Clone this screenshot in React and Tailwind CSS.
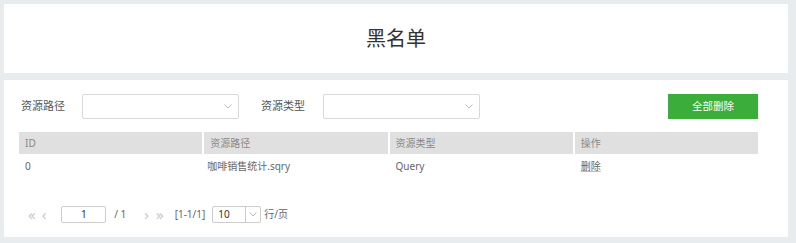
import React from "react";

const FONT = { fontFamily: '"Noto Sans", "Noto Sans CJK SC", sans-serif' };

function Chevron() {
  return (
    <svg width="8" height="5" viewBox="0 0 8 5">
      <polyline points="0.5,0.5 4,4 7.5,0.5" fill="none" stroke="#bbb" strokeWidth="1" />
    </svg>
  );
}

function Select() {
  return (
    <div className="w-[157px] h-[25px] border border-[#d9d9d9] rounded-[2px] bg-white flex items-center justify-end pr-[6px]">
      <Chevron />
    </div>
  );
}

export default function App() {
  const cols = ["ID", "资源路径", "资源类型", "操作"];
  return (
    <div className="w-[796px] h-[243px] bg-[#e9ecef] p-[4px] pr-[8px] flex flex-col gap-[7px] text-[#555]" style={FONT}>
      <div className="h-[69px] bg-white flex items-center justify-center">
        <span className="text-[20px] text-[#333] leading-none">黑名单</span>
      </div>
      <div className="h-[157px] bg-white pl-[15px] pr-[30px] pt-[14px] flex flex-col">
        <div className="flex items-center h-[25px] text-[11px] text-[#555]">
          <span className="ml-[2px] w-[61px]">资源路径</span>
          <Select />
          <span className="ml-[22px] w-[62px]">资源类型</span>
          <Select />
          <div className="flex-1" />
          <button className="w-[90px] h-[25px] bg-[#3aad3a] text-white text-[10.5px] flex items-center justify-center">全部删除</button>
        </div>
        <div className="mt-[13px] grid grid-cols-4 gap-x-[2px] text-[10px] text-[#888]">
          {cols.map((c) => (
            <div key={c} className="h-[22px] bg-[#e0e0e0] flex items-center pl-[6px]">{c}</div>
          ))}
          <div className="h-[24px] flex items-center pl-[6px] text-[#666]">0</div>
          <div className="h-[24px] flex items-center pl-[3px] text-[#666]">咖啡销售统计.sqry</div>
          <div className="h-[24px] flex items-center pl-[6px] text-[#666]">Query</div>
          <div className="h-[24px] flex items-center pl-[6px] text-[#666]"><span className="underline decoration-[#bbb]">删除</span></div>
        </div>
        <div className="mt-[28px] flex items-center h-[17px] text-[10px] text-[#666]">
          <span className="ml-[9px] text-[#c8c8c8] text-[15px] leading-none">«</span>
          <span className="ml-[6px] text-[#c8c8c8] text-[15px] leading-none">‹</span>
          <div className="ml-[15px] w-[45px] h-[17px] border border-[#ccc] rounded-[2px] flex items-center justify-center text-[#333]">1</div>
          <span className="ml-[8px]">/ 1</span>
          <span className="ml-[18px] text-[#c8c8c8] text-[15px] leading-none">›</span>
          <span className="ml-[7px] text-[#c8c8c8] text-[15px] leading-none">»</span>
          <span className="ml-[11px]">[1-1/1]</span>
          <div className="ml-[7px] w-[49px] h-[17px] border border-[#ccc] rounded-[2px] flex items-center text-[#333]">
            <span className="w-[32px] pl-[5px]">10</span>
            <div className="flex-1 h-full border-l border-[#ccc] flex items-center justify-center">
              <Chevron />
            </div>
          </div>
          <span className="ml-[3px]">行/页</span>
        </div>
      </div>
    </div>
  );
}
